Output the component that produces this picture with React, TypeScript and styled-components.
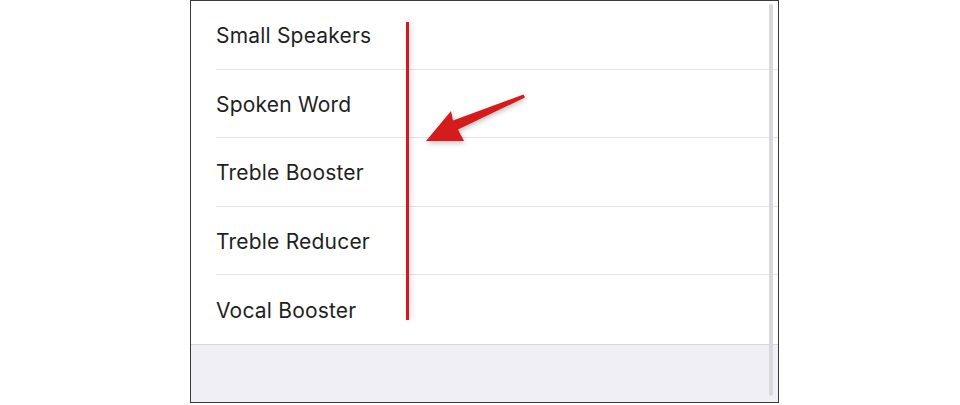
import styled, { createGlobalStyle } from 'styled-components'

const GlobalStyle = createGlobalStyle`
  html, body {
    margin: 0;
    padding: 0;
    background: #ffffff;
  }
`

const presets = [
  'Small Speakers',
  'Spoken Word',
  'Treble Booster',
  'Treble Reducer',
  'Vocal Booster',
]

export default function App(): JSX.Element {
  return (
    <>
      <GlobalStyle />
      <Page>
        <Frame>
          <List>
            {presets.map((name, i) => (
              <Row key={name}>
                <RowInner $last={i === presets.length - 1}>{name}</RowInner>
              </Row>
            ))}
          </List>
          <Footer />
          <Scrollbar />
          <Marker />
          <Arrow width="110" height="60" viewBox="0 0 110 60">
            <defs>
              <filter id="arrowShadow" x="-20%" y="-40%" width="140%" height="180%">
                <feDropShadow dx="1" dy="2" stdDeviation="2.5" floodColor="#000" floodOpacity="0.25" />
              </filter>
            </defs>
            <path
              d="M5 48 L30 18 L32 27.5 L102.5 1.5 L104 4.5 L37 36.5 L43 48 Z"
              fill="#d41b1f"
              filter="url(#arrowShadow)"
            />
          </Arrow>
        </Frame>
      </Page>
    </>
  )
}

const Page = styled.div`
  width: 960px;
  height: 405px;
  display: flex;
  justify-content: flex-start;
  padding-left: 190px;
  box-sizing: border-box;
  font-family: Inter, 'Noto Sans', sans-serif;
`

const Frame = styled.div`
  position: relative;
  width: 589px;
  height: 403px;
  box-sizing: border-box;
  border: 1.5px solid #3a3a3a;
  background: #ffffff;
  display: flex;
  flex-direction: column;
  overflow: hidden;
`

const List = styled.div`
  display: flex;
  flex-direction: column;
  border-bottom: 1px solid #d6d6da;
`

const Row = styled.div`
  height: 68.5px;
  padding-left: 25px;
  box-sizing: border-box;
  display: flex;
`

const RowInner = styled.div<{ $last: boolean }>`
  flex: 1;
  display: flex;
  align-items: center;
  padding-top: 2px;
  border-bottom: ${({ $last }) => ($last ? 'none' : '1px solid #e4e4e6')};
  font-size: 21px;
  color: #1f1f1f;
  letter-spacing: 0.2px;
`

const Footer = styled.div`
  flex: 1;
  background: #f0eff5;
`

const Scrollbar = styled.div`
  position: absolute;
  top: 3px;
  bottom: 6px;
  right: 5px;
  width: 4px;
  border-radius: 2px;
  background: #d9d9dd;
`

const Marker = styled.div`
  position: absolute;
  left: 215px;
  top: 21px;
  width: 3px;
  height: 298px;
  background: #d11a20;
  box-shadow: 2px 0 6px rgba(0, 0, 0, 0.18);
`

const Arrow = styled.svg`
  position: absolute;
  left: 230px;
  top: 92px;
  overflow: visible;
`
